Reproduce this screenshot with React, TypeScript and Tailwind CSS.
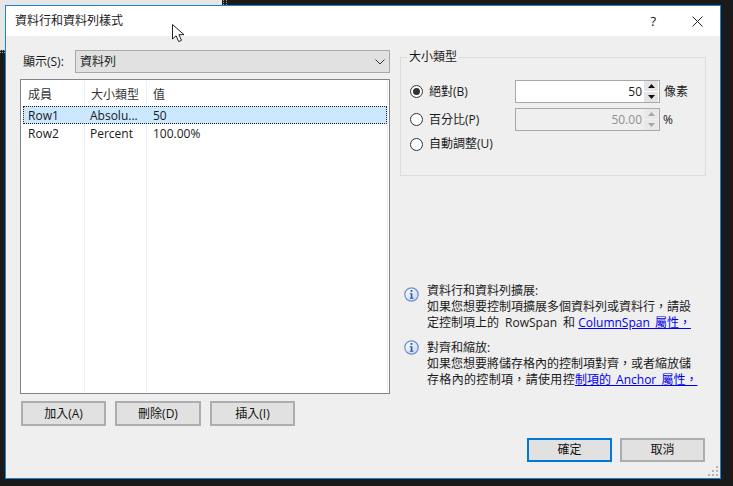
import React from "react";

const FONT = { fontFamily: '"Open Sans", "Noto Sans CJK TC", sans-serif' };

function Radio({ checked, label }: { checked?: boolean; label: string }) {
  return (
    <div className="flex items-center h-[16px] gap-[6px]">
      <span className="w-[13px] h-[13px] rounded-full border border-[#333333] bg-white flex items-center justify-center shrink-0">
        {checked && <span className="w-[7px] h-[7px] rounded-full bg-[#333333]" />}
      </span>
      <span className="text-[12px] text-[#1a1a1a] whitespace-nowrap">{label}</span>
    </div>
  );
}

function Spin({ disabled }: { disabled?: boolean }) {
  const c = disabled ? "#a8a8a8" : "#111111";
  const b = disabled ? "bg-[#e8e8e8]" : "bg-[#e4e4e4]";
  return (
    <div className="flex flex-col w-[14px] gap-[1px] shrink-0">
      <div className={`h-[10px] ${b} flex items-center justify-center`}>
        <svg width="7" height="4" viewBox="0 0 7 4"><path d="M3.5 0 7 4H0z" fill={c} /></svg>
      </div>
      <div className={`h-[10px] ${b} flex items-center justify-center`}>
        <svg width="7" height="4" viewBox="0 0 7 4"><path d="M0 0h7L3.5 4z" fill={c} /></svg>
      </div>
    </div>
  );
}

function Info() {
  return (
    <svg width="15" height="15" viewBox="0 0 15 15" className="shrink-0">
      <defs>
        <linearGradient id="ig" x1="0" y1="0" x2="1" y2="1">
          <stop offset="0" stopColor="#ffffff" />
          <stop offset="1" stopColor="#c4d6f2" />
        </linearGradient>
      </defs>
      <circle cx="7.5" cy="7.5" r="6.7" fill="url(#ig)" stroke="#6f8fc8" strokeWidth="1.2" />
      <rect x="6.6" y="3" width="1.8" height="1.8" fill="#2a55b0" />
      <path d="M5.8 6.2h2.6v4.6h1v1H5.8v-1h1V7.2h-1z" fill="#2a55b0" />
    </svg>
  );
}

function Btn({ label, cls }: { label: string; cls: string }) {
  return (
    <button className={`h-[25px] border-2 border-[#adadad] bg-[#e1e1e1] text-[12px] text-[#111111] flex items-center justify-center ${cls}`}>
      {label}
    </button>
  );
}

const ROWS = [
  { a: "Row1", b: "Absolu...", c: "50", sel: true },
  { a: "Row2", b: "Percent", c: "100.00%", sel: false },
];

export default function App() {
  return (
    <div style={FONT} className="relative w-[733px] h-[486px] bg-[#1a1a1a] overflow-hidden pl-[5px] pt-[5px]">
      {/* windows behind the dialog */}
      <div className="absolute left-0 top-0 w-[222px] h-[5px] bg-[#e6e6e6]" />
      <div className="absolute left-0 top-0 w-[5px] h-[50px] bg-[#e6e6e6]" />
      <div className="absolute left-[223px] top-0 w-[2px] h-[5px] border-l border-dotted border-[#9aa0a8]" />
      <div className="absolute left-[226px] top-0 w-[2px] h-[5px] border-l border-dotted border-[#9aa0a8]" />
      <div className="absolute left-0 top-[50px] w-[5px] h-[3px] border-y border-dotted border-[#9aa0a8]" />

      <div className="relative w-[716px] h-[474px] border border-[#1783d8] bg-[#efefef] flex flex-col">
        {/* title bar */}
        <div className="h-[30px] bg-white flex items-center justify-between pl-[9px] shrink-0">
          <span className="text-[12px] text-[#1a1a1a]">資料行和資料列樣式</span>
          <div className="flex items-center">
            <span className="text-[13px] text-[#111111] mr-[36px] leading-none">?</span>
            <svg width="11" height="11" viewBox="0 0 11 11" className="mr-[17px]">
              <path d="M.5.5l10 10M10.5.5l-10 10" stroke="#222222" strokeWidth="1" fill="none" />
            </svg>
          </div>
        </div>

        {/* body */}
        <div className="flex flex-1 min-h-0">
          {/* left column */}
          <div className="ml-[14px] w-[370px] shrink-0 flex flex-col pt-[14px]">
            <div className="flex items-center h-[23px]">
              <span className="ml-[3px] w-[52px] text-[12px] text-[#1a1a1a] whitespace-nowrap">顯示(S):</span>
              <div className="flex-1 h-[23px] border border-[#a8a8a8] bg-[#e1e1e1] flex items-center justify-between pl-[4px] pr-[3px]">
                <span className="text-[12px] text-[#1a1a1a]">資料列</span>
                <svg width="10" height="6" viewBox="0 0 10 6" className="mr-[1px]">
                  <path d="M.5.5 5 5 9.5.5" stroke="#333333" fill="none" />
                </svg>
              </div>
            </div>

            <div className="relative mt-[6px] h-[315px] border border-[#82828c] bg-white px-[2px] pt-[1px]">
              <div className="absolute left-[63px] top-[1px] bottom-[1px] w-px bg-[#e6f1fb]" />
              <div className="absolute left-[125px] top-[1px] bottom-[1px] w-px bg-[#e6f1fb]" />
              <div className="absolute right-[1px] top-[1px] bottom-[1px] w-px bg-[#e6f1fb]" />
              <div className="relative grid grid-cols-[63px_62px_1fr] h-[25px] items-center text-[12px] text-[#333333] pl-[5px] pt-[2px]">
                <span>成員</span>
                <span>大小類型</span>
                <span>值</span>
              </div>
              {ROWS.map((r) => (
                <div
                  key={r.a}
                  className={`relative grid grid-cols-[62px_62px_1fr] h-[18px] items-center text-[12px] text-[#1a1a1a] pl-[4px] border border-dotted ${
                    r.sel ? "bg-[#cce8ff] border-[#222222]" : "border-transparent"
                  }`}
                >
                  <span>{r.a}</span>
                  <span>{r.b}</span>
                  <span className="pl-[1px]">{r.c}</span>
                </div>
              ))}
            </div>

            <div className="flex mt-[7px] ml-[1px] gap-[9px]">
              <Btn label="加入(A)" cls="w-[85px]" />
              <Btn label="刪除(D)" cls="w-[86px]" />
              <Btn label="插入(I)" cls="w-[85px]" />
            </div>
          </div>

          {/* right column */}
          <div className="ml-[10px] w-[306px] shrink-0 flex flex-col">
            <fieldset className="mt-[13px] h-[127px] border border-[#dcdcdc] pl-[9px] pr-[8px]">
              <legend className="-ml-[3px] px-[2px] text-[12px] text-[#1a1a1a] leading-[16px]">大小類型</legend>
              <div className="grid grid-cols-[105px_145px_1fr] grid-rows-[23px_23px_16px] gap-y-[5px] pt-[15px] items-center">
                <Radio checked label="絕對(B)" />
                <div className="h-[23px] border border-[#a8a8a8] bg-white flex items-center justify-end pr-[1px] gap-[2px] text-[12px] text-[#1a1a1a]">
                  <span>50</span>
                  <Spin />
                </div>
                <span className="pl-[4px] text-[12px] text-[#1a1a1a] whitespace-nowrap">像素</span>

                <Radio label="百分比(P)" />
                <div className="h-[23px] border border-[#a8a8a8] bg-[#efefef] flex items-center justify-end pr-[1px] gap-[2px] text-[12px] text-[#8f8f8f]">
                  <span>50.00</span>
                  <Spin disabled />
                </div>
                <span className="pl-[3px] text-[12px] text-[#1a1a1a]">%</span>

                <Radio label="自動調整(U)" />
              </div>
            </fieldset>

            <div className="mt-[107px] flex flex-col gap-[9px] ml-[4px] w-[300px]">
              <div className="flex items-start gap-[8px]">
                <div className="pt-[4px]"><Info /></div>
                <p className="text-[12px] leading-[16px] text-[#1a1a1a] w-[275px]">
                  資料行和資料列擴展:<br />
                  如果您想要控制項擴展多個資料列或資料行，請設<br />
                  <span className="[word-spacing:3px]">定控制項上的 RowSpan 和</span>{" "}
                  <span className="text-[#0000ee] underline [word-spacing:2px]">ColumnSpan 屬性，</span>
                </p>
              </div>
              <div className="flex items-start gap-[8px]">
                <Info />
                <p className="text-[12px] leading-[16px] text-[#1a1a1a] w-[275px]">
                  對齊和縮放:<br />
                  如果您想要將儲存格內的控制項對齊，或者縮放儲<br />
                  <span className="tracking-[0.33px]">存格內的控制項，請使用控</span><span className="text-[#0000ee] underline [word-spacing:2px]">制項的 Anchor 屬性，</span>
                </p>
              </div>
            </div>

            <div className="flex justify-end gap-[8px] mt-auto mb-[16px] mr-[1px]">
              <button className="w-[85px] h-[24px] border-2 border-[#0078d7] bg-[#e1e1e1] text-[12px] text-[#111111]">確定</button>
              <Btn label="取消" cls="w-[85px] !h-[24px]" />
            </div>
          </div>
        </div>

        {/* resize grip */}
        <svg width="12" height="12" viewBox="0 0 12 12" className="absolute right-0 bottom-0">
          <g fill="#b4b4b4">
            <rect x="8" y="0" width="2" height="2" />
            <rect x="4" y="4" width="2" height="2" />
            <rect x="8" y="4" width="2" height="2" />
            <rect x="0" y="8" width="2" height="2" />
            <rect x="4" y="8" width="2" height="2" />
            <rect x="8" y="8" width="2" height="2" />
          </g>
        </svg>
      </div>

      {/* mouse pointer */}
      <svg width="14" height="20" viewBox="0 0 14 20" className="absolute left-[172px] top-[24px]">
        <path d="M.5.5v14.5l3.6-3.2 2.6 5.8 2.8-1.3-2.6-5.6h5.1z" fill="#ffffff" stroke="#222222" strokeWidth="1" strokeLinejoin="round" />
      </svg>
    </div>
  );
}
